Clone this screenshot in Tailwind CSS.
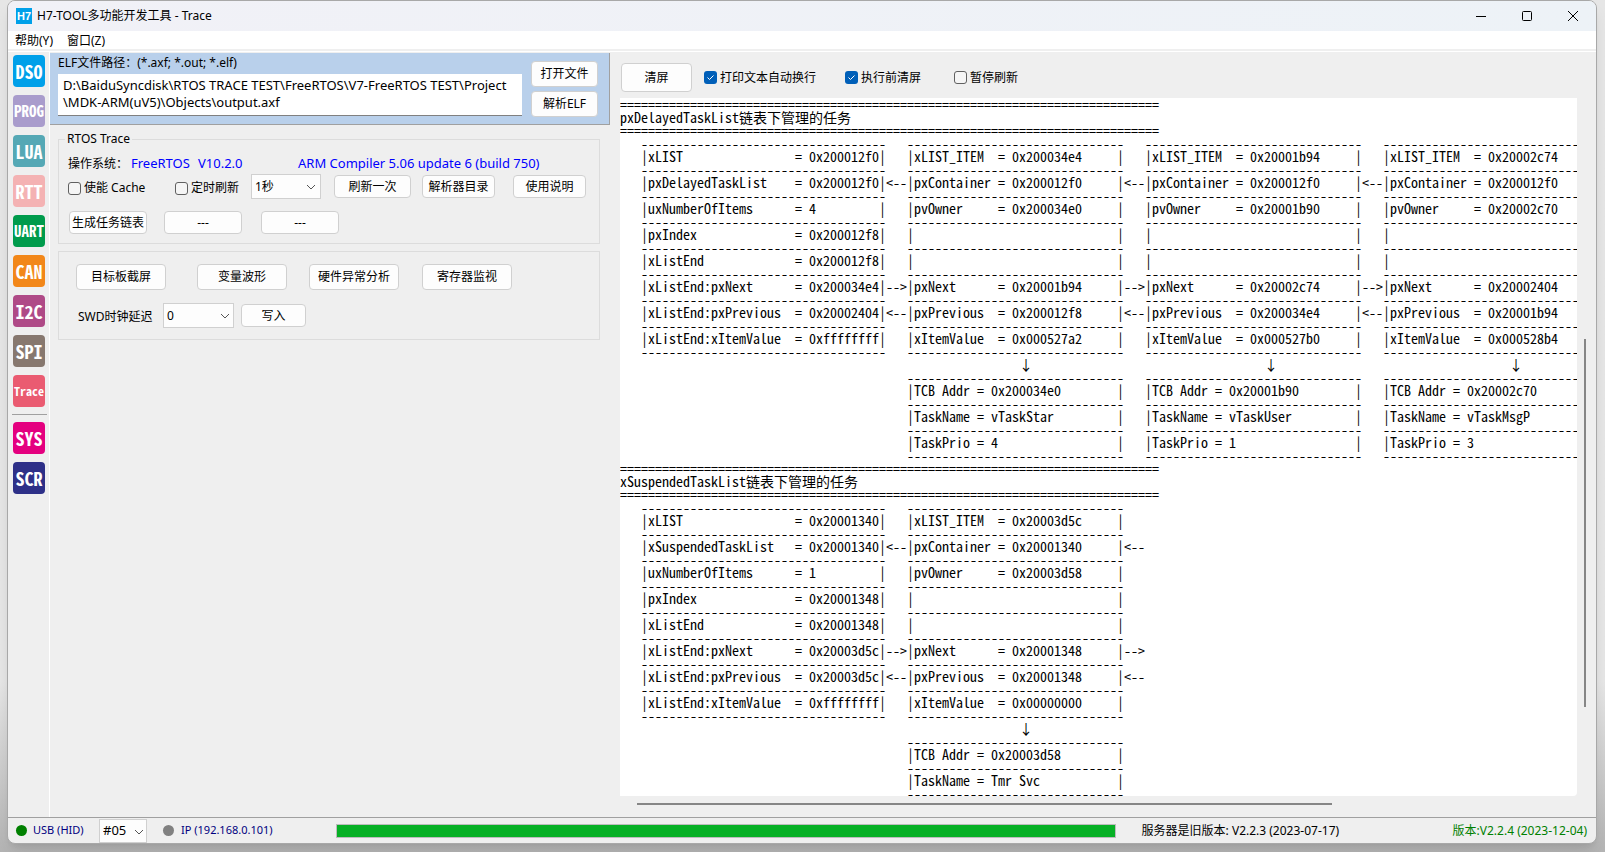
<!DOCTYPE html>
<html lang="zh-CN">
<head>
    <meta charset="UTF-8" />
    <meta name="viewport" content="width=device-width, initial-scale=1.0" />
    <title>H7-TOOL多功能开发工具 - Trace</title>
    <script src="https://cdn.jsdelivr.net/npm/@tailwindcss/browser@4"></script>
</head>
<body class="h-screen overflow-hidden bg-linear-to-b from-[#e6e6e6] from-80% to-[#b4b4b4] pl-[7px] pr-2 pb-2 font-['Noto_Sans','Noto_Sans_CJK_SC',sans-serif] text-xs text-black">
    <!-- Main window -->
    <div class="flex h-full flex-col overflow-hidden rounded-lg border border-[#a8a8a8] bg-[#efefef] shadow-lg">
        <!-- Title bar -->
        <header class="flex h-[30px] shrink-0 items-center bg-linear-to-r from-[#f1f1f7] to-[#edf2f7] pl-2">
            <span class="flex size-4 items-center justify-center bg-[#00a0e9] font-['Liberation_Sans',sans-serif] text-[11px] font-bold text-white">H7</span>
            <h1 class="ml-[5px]">H7-TOOL多功能开发工具 - Trace</h1>
            <div class="ml-auto flex">
                <button aria-label="最小化" class="flex h-[30px] w-[46px] items-center justify-center">
                    <svg class="size-3" viewBox="0 0 12 12" fill="none" stroke="#000"><path d="M1 6.5h10" /></svg>
                </button>
                <button aria-label="最大化" class="flex h-[30px] w-[46px] items-center justify-center">
                    <svg class="size-3" viewBox="0 0 12 12" fill="none" stroke="#000"><rect x="1.5" y="1.5" width="9" height="9" rx="1" /></svg>
                </button>
                <button aria-label="关闭" class="flex h-[30px] w-[46px] items-center justify-center">
                    <svg class="size-3" viewBox="0 0 12 12" fill="none" stroke="#000"><path d="M1 1l10 10M11 1L1 11" /></svg>
                </button>
            </div>
        </header>

        <!-- Menu bar -->
        <nav class="flex h-[18px] shrink-0 items-center gap-[14px] bg-white pl-[7px] pt-[2px]">
            <button>帮助(Y)</button>
            <button>窗口(Z)</button>
        </nav>

        <div class="mt-[2px] flex min-h-0 flex-1 border-t border-white">
            <!-- Tool strip -->
            <aside class="flex w-[42px] shrink-0 flex-col gap-2 border-r border-white pl-[5px] pt-[3px] font-['Noto_Sans_Mono_CJK_SC','Liberation_Sans',sans-serif] font-bold text-white">
                <button class="size-8 rounded-sm bg-[#00a0e9] text-lg">DSO</button>
                <button class="size-8 rounded-sm bg-[#a99ccc] text-[15px]">PROG</button>
                <button class="size-8 rounded-sm bg-[#55a8b5] text-lg">LUA</button>
                <button class="size-8 rounded-sm bg-[#f4b2b3] text-lg">RTT</button>
                <button class="size-8 rounded-sm bg-[#009b4c] text-[15px]">UART</button>
                <button class="size-8 rounded-sm bg-[#f28719] text-lg">CAN</button>
                <button class="size-8 rounded-sm bg-[#af4a87] text-lg">I2C</button>
                <button class="size-8 rounded-sm bg-[#87786f] text-lg">SPI</button>
                <button class="size-8 rounded-sm bg-[#ea5b71] text-xs">Trace</button>
                <hr class="-my-px -ml-px mr-[2px] border-t-1 border-[#a0a0a0]" />
                <button class="size-8 rounded-sm bg-[#e4007f] text-lg">SYS</button>
                <button class="size-8 rounded-sm bg-[#2e3088] text-lg">SCR</button>
            </aside>

            <!-- Left pane -->
            <main class="w-[560px] shrink-0">
                <section class="mt-px flex h-[72px] border-r border-b border-[#a0a0a0] bg-[#b9d0eb] pl-2 pr-[11px]">
                    <div class="w-[464px]">
                        <label for="elf" class="block h-[21px] leading-5">ELF文件路径：(*.axf; *.out; *.elf)</label>
                        <textarea id="elf" class="block h-[42px] w-full resize-none overflow-hidden border-b border-[#808080] bg-white px-[5px] pt-[3px] text-[13px] leading-[17px]">D:\BaiduSyncdisk\RTOS TRACE TEST\FreeRTOS\V7-FreeRTOS TEST\Project
\MDK-ARM(uV5)\Objects\output.axf</textarea>
                    </div>
                    <div class="ml-auto flex flex-col gap-1 pt-2">
                        <button class="h-[26px] w-[67px] rounded-sm border border-[#d0d0d0] bg-[#fdfdfd]">打开文件</button>
                        <button class="h-[26px] w-[67px] rounded-sm border border-[#d0d0d0] bg-[#fdfdfd]">解析ELF</button>
                    </div>
                </section>

                <fieldset class="ml-2 mr-[10px] mt-[6px] h-[113px] border border-[#dcdcdc] pl-[9px]">
                    <legend class="-ml-[3px] h-4 px-[2px] leading-4">RTOS Trace</legend>
                    <div class="mt-[9px] flex h-4 items-center text-[13px] text-[#0000ff]">
                        <span class="w-[63px] text-xs text-black">操作系统：</span>
                        <span class="w-[67px]">FreeRTOS</span>
                        <span class="w-[100px]">V10.2.0</span>
                        <span>ARM Compiler 5.06 update 6 (build 750)</span>
                    </div>
                    <div class="mt-[2px] flex h-[25px] items-center">
                        <label class="flex w-[107px] items-center gap-[3px] pt-[3px]"><input type="checkbox" class="size-[13px] appearance-none rounded-[3px] border border-[#606060] bg-[#f5f5f5]" />使能 Cache</label>
                        <label class="flex w-[76px] items-center gap-[3px] pt-[3px]"><input type="checkbox" class="size-[13px] appearance-none rounded-[3px] border border-[#606060] bg-[#f5f5f5]" />定时刷新</label>
                        <div class="relative w-[70px]">
                            <select aria-label="刷新周期" class="h-[25px] w-full appearance-none border border-[#d0d0d0] bg-[#fdfdfd] pl-[3px]"><option>1秒</option></select>
                            <svg class="pointer-events-none absolute right-[5px] top-[9px] h-2 w-[10px]" viewBox="0 0 10 8" fill="none" stroke="#555"><path d="M1 2l4 4 4-4" /></svg>
                        </div>
                        <button class="ml-[13px] h-[23px] w-[77px] rounded-sm border border-[#d0d0d0] bg-[#fdfdfd]">刷新一次</button>
                        <button class="ml-[11px] h-[23px] w-[73px] rounded-sm border border-[#d0d0d0] bg-[#fdfdfd]">解析器目录</button>
                        <button class="ml-[18px] h-[23px] w-[73px] rounded-sm border border-[#d0d0d0] bg-[#fdfdfd]">使用说明</button>
                    </div>
                    <div class="mt-3 flex pl-px">
                        <button class="h-[23px] w-[78px] rounded-sm border border-[#d0d0d0] bg-[#fdfdfd]">生成任务链表</button>
                        <button class="ml-[17px] h-[23px] w-[78px] rounded-sm border border-[#d0d0d0] bg-[#fdfdfd]">---</button>
                        <button class="ml-[19px] h-[23px] w-[78px] rounded-sm border border-[#d0d0d0] bg-[#fdfdfd]">---</button>
                    </div>
                </fieldset>

                <section class="ml-2 mr-[10px] mt-[7px] h-[89px] border border-[#dcdcdc] pl-[17px] pt-3">
                    <div class="flex">
                        <button class="h-[26px] w-[90px] rounded-sm border border-[#d0d0d0] bg-[#fdfdfd]">目标板截屏</button>
                        <button class="ml-[31px] h-[26px] w-[90px] rounded-sm border border-[#d0d0d0] bg-[#fdfdfd]">变量波形</button>
                        <button class="ml-[22px] h-[26px] w-[90px] rounded-sm border border-[#d0d0d0] bg-[#fdfdfd]">硬件异常分析</button>
                        <button class="ml-[23px] h-[26px] w-[90px] rounded-sm border border-[#d0d0d0] bg-[#fdfdfd]">寄存器监视</button>
                    </div>
                    <div class="mt-[13px] flex items-center">
                        <label for="swd" class="w-[87px] pl-[2px] pt-[2px]">SWD时钟延迟</label>
                        <div class="relative w-[71px]">
                            <select id="swd" class="h-[25px] w-full appearance-none border border-[#d0d0d0] bg-[#fdfdfd] pl-[3px]"><option>0</option></select>
                            <svg class="pointer-events-none absolute right-[4px] top-[9px] h-2 w-[10px]" viewBox="0 0 10 8" fill="none" stroke="#555"><path d="M1 2l4 4 4-4" /></svg>
                        </div>
                        <button class="ml-[7px] h-[23px] w-[65px] rounded-sm border border-[#d0d0d0] bg-[#fdfdfd]">写入</button>
                    </div>
                </section>
            </main>

            <!-- Output pane -->
            <section class="flex min-w-0 flex-1 flex-col pl-[10px]">
                <div class="flex h-[46px] shrink-0 items-center pt-[5px]">
                    <button class="ml-px h-[29px] w-[71px] rounded-sm border border-[#d0d0d0] bg-[#fdfdfd]">清屏</button>
                    <label class="ml-3 flex w-[141px] items-center gap-[3px]">
                        <input type="checkbox" checked class="size-[13px] appearance-none rounded-[3px] bg-[#005fb8]" />
                        <svg class="pointer-events-none -ml-4 size-[13px]" viewBox="0 0 13 13" fill="none" stroke="#fff"><path d="M3.500 6.500l2 2 4-4" /></svg>
                        打印文本自动换行
                    </label>
                    <label class="flex w-[109px] items-center gap-[3px]">
                        <input type="checkbox" checked class="size-[13px] appearance-none rounded-[3px] bg-[#005fb8]" />
                        <svg class="pointer-events-none -ml-4 size-[13px]" viewBox="0 0 13 13" fill="none" stroke="#fff"><path d="M3.500 6.500l2 2 4-4" /></svg>
                        执行前清屏
                    </label>
                    <label class="flex items-center gap-[3px]"><input type="checkbox" class="size-[13px] appearance-none rounded-[3px] border border-[#606060] bg-[#f5f5f5]" />暂停刷新</label>
                </div>
                <div class="flex min-h-0 flex-1">
                    <pre id="log" class="min-w-0 flex-1 overflow-hidden rounded-br-sm bg-white font-['Noto_Sans_Mono_CJK_SC','Noto_Sans_CJK_SC',monospace] text-[14px] leading-[13px]"></pre>
                    <div class="w-[19px] shrink-0 pl-[7px] pt-[241px]">
                        <div class="h-[368px] w-[2px] bg-[#868686]"></div>
                    </div>
                </div>
                <div class="flex h-[21px] shrink-0 pl-[17px] pt-[7px]">
                    <div class="h-[2px] w-[695px] bg-[#868686]"></div>
                </div>
            </section>
        </div>

        <!-- Status bar -->
        <footer class="flex h-[26px] shrink-0 items-center border-t border-[#a0a0a0] pl-2 pr-[9px]">
            <span class="size-[11px] rounded-full bg-[#008000]"></span>
            <span class="ml-[6px] w-[66px] text-[11px] text-[#000080]">USB (HID)</span>
            <div class="relative w-[48px]">
                <select aria-label="设备编号" class="h-6 w-full appearance-none border border-[#d0d0d0] bg-[#fdfdfd] pl-[3px] text-[13px]"><option>#05</option></select>
                <svg class="pointer-events-none absolute right-[3px] top-[9px] h-2 w-[10px]" viewBox="0 0 10 8" fill="none" stroke="#555"><path d="M1 2l4 4 4-4" /></svg>
            </div>
            <span class="ml-4 size-[11px] rounded-full bg-[#808080]"></span>
            <span class="ml-[7px] w-[155px] text-[11px] text-[#000080]">IP (192.168.0.101)</span>
            <div role="progressbar" aria-valuenow="100" aria-label="进度" class="h-[14px] flex-1 border border-[#bcbcbc] bg-[#06b025]"></div>
            <span class="ml-[26px] w-[311px]">服务器是旧版本: V2.2.3 (2023-07-17)</span>
            <span class="text-right text-[#008000]">版本:V2.2.4 (2023-12-04)</span>
        </footer>
    </div>

    <script>
        const RULE = '='.repeat(77);
        const LIST_LINE = '-'.repeat(35);
        const ITEM_LINE = '-'.repeat(31);
        const VISIBLE_LINES = 54;

        // Links drawn between two boxes, by row index
        const LINKS = { 1: '<--', 5: '-->', 6: '<--' };

        function listRow(name, value) {
            return '|' + name.padEnd(21) + '= ' + value.padEnd(10) + '|';
        }

        function itemRow(name, value, width) {
            const text = name ? name.padEnd(width) + '= ' + value : '';
            return '|' + text.padEnd(29) + '|';
        }

        function printList(list) {
            const out = [RULE, list.name + '链表下管理的任务', RULE];
            const head = [
                ['xLIST', list.addr], [list.name, list.addr], ['uxNumberOfItems', list.count],
                ['pxIndex', list.end], ['xListEnd', list.end], ['xListEnd:pxNext', list.next],
                ['xListEnd:pxPrevious', list.prev], ['xListEnd:xItemValue', '0xffffffff'],
            ];
            const line = '   ' + [LIST_LINE, ...list.items.map(() => ITEM_LINE)].join('   ');
            out.push(line);
            head.forEach(([name, value], i) => {
                const link = LINKS[i] || '   ';
                const cells = list.items.map((t) => {
                    const rows = [
                        ['xLIST_ITEM', t.item], ['pxContainer', list.addr], ['pvOwner', t.tcb], ['', ''],
                        ['', ''], ['pxNext', t.next], ['pxPrevious', t.prev], ['xItemValue', t.value],
                    ];
                    return itemRow(rows[i][0], rows[i][1], 12);
                });
                out.push('   ' + [listRow(name, value), ...cells].join(link) + link, line);
            });

            // Task control blocks under each item
            const pad = ' '.repeat(41);
            const tcbLine = pad + list.items.map(() => ITEM_LINE).join('   ');
            out.push(' '.repeat(57) + list.items.map(() => '↓').join(' '.repeat(33)), tcbLine);
            [['TCB Addr', 'tcb'], ['TaskName', 'task'], ['TaskPrio', 'prio']].forEach(([label, key]) => {
                out.push(pad + list.items.map((t) => itemRow(label, t[key], 9)).join('   '), tcbLine);
            });
            return out;
        }

        const lists = [
            {
                name: 'pxDelayedTaskList', addr: '0x200012f0', count: '4', end: '0x200012f8', next: '0x200034e4', prev: '0x20002404',
                items: [
                    { item: '0x200034e4', tcb: '0x200034e0', next: '0x20001b94', prev: '0x200012f8', value: '0x000527a2', task: 'vTaskStar', prio: '4' },
                    { item: '0x20001b94', tcb: '0x20001b90', next: '0x20002c74', prev: '0x200034e4', value: '0x000527b0', task: 'vTaskUser', prio: '1' },
                    { item: '0x20002c74', tcb: '0x20002c70', next: '0x20002404', prev: '0x20001b94', value: '0x000528b4', task: 'vTaskMsgP', prio: '3' },
                ],
            },
            {
                name: 'xSuspendedTaskList', addr: '0x20001340', count: '1', end: '0x20001348', next: '0x20003d5c', prev: '0x20003d5c',
                items: [
                    { item: '0x20003d5c', tcb: '0x20003d58', next: '0x20001348', prev: '0x20001348', value: '0x00000000', task: 'Tmr Svc', prio: '2' },
                ],
            },
        ];

        const lines = lists.flatMap(printList).slice(0, VISIBLE_LINES);
        document.getElementById('log').textContent = lines.join('\n');
    </script>
</body>
</html>
